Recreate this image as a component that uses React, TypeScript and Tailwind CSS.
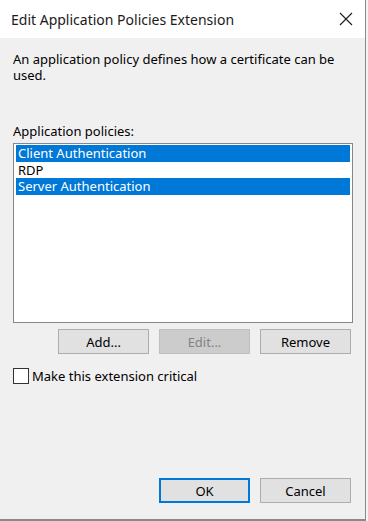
import { useState } from "react";

const policies = [
  { name: "Client Authentication", selected: true },
  { name: "RDP", selected: false },
  { name: "Server Authentication", selected: true },
];

function WinButton({
  label,
  disabled = false,
  primary = false,
}: {
  label: string;
  disabled?: boolean;
  primary?: boolean;
}) {
  return (
    <button
      type="button"
      disabled={disabled}
      className={`flex h-[25px] w-[91px] items-center justify-center text-[13px] ${
        disabled
          ? "border border-[#bfbfbf] bg-[#cccccc] text-[#838383]"
          : primary
            ? "border-2 border-[#0078d7] bg-[#e1e1e1] text-black"
            : "border border-[#adadad] bg-[#e1e1e1] text-black"
      }`}
    >
      {label}
    </button>
  );
}

export default function App() {
  const [critical, setCritical] = useState(false);

  return (
    <div
      className="h-[521px] w-[368px] overflow-hidden bg-[#f3f3f3]"
      style={{ fontFamily: '"Noto Sans", "Open Sans", sans-serif' }}
    >
      <div className="flex h-[521px] w-[366px] flex-col border-r border-b-2 border-r-[#8a8a8a] border-b-[#8a8a8a] bg-[#f0f0f0]">
        {/* Title bar */}
        <div className="flex h-[38px] items-center justify-between bg-white pl-[11px] pr-[12px]">
          <span className="text-[14px] text-[#1a1a1a]">Edit Application Policies Extension</span>
          <svg width="14" height="14" viewBox="0 0 14 14" className="text-[#1a1a1a]">
            <path d="M1 1 L13 13 M13 1 L1 13" stroke="currentColor" strokeWidth="1.1" fill="none" />
          </svg>
        </div>

        {/* Body */}
        <div className="flex flex-1 flex-col pl-[13px] pr-[13px] text-[13px] leading-[16px] text-black">
          <p className="mt-[13px]">An application policy defines how a certificate can be used.</p>

          <p className="mt-[40px]">Application policies:</p>

          <div className="mt-[4px] h-[180px] w-[340px] border border-[#828790] bg-white px-[2px] py-[1px]">
            {policies.map((p) => (
              <div
                key={p.name}
                className={`h-[16.5px] pl-[2px] leading-[16px] ${
                  p.selected ? "bg-[#0078d7] text-white" : "text-black"
                }`}
              >
                {p.name}
              </div>
            ))}
          </div>

          <div className="mt-[6px] flex justify-end gap-[10px] pr-[1px]">
            <WinButton label="Add..." />
            <WinButton label="Edit..." disabled />
            <WinButton label="Remove" />
          </div>

          <label className="mt-[14px] flex items-center gap-[3px]">
            <span
              onClick={() => setCritical(!critical)}
              className="h-[16px] w-[16px] border-[1.5px] border-[#333333] bg-white"
            />
            <span>Make this extension critical</span>
          </label>

          <div className="mt-auto mb-[16px] flex justify-end gap-[10px] pr-[1px]">
            <WinButton label="OK" primary />
            <WinButton label="Cancel" />
          </div>
        </div>
      </div>
    </div>
  );
}
